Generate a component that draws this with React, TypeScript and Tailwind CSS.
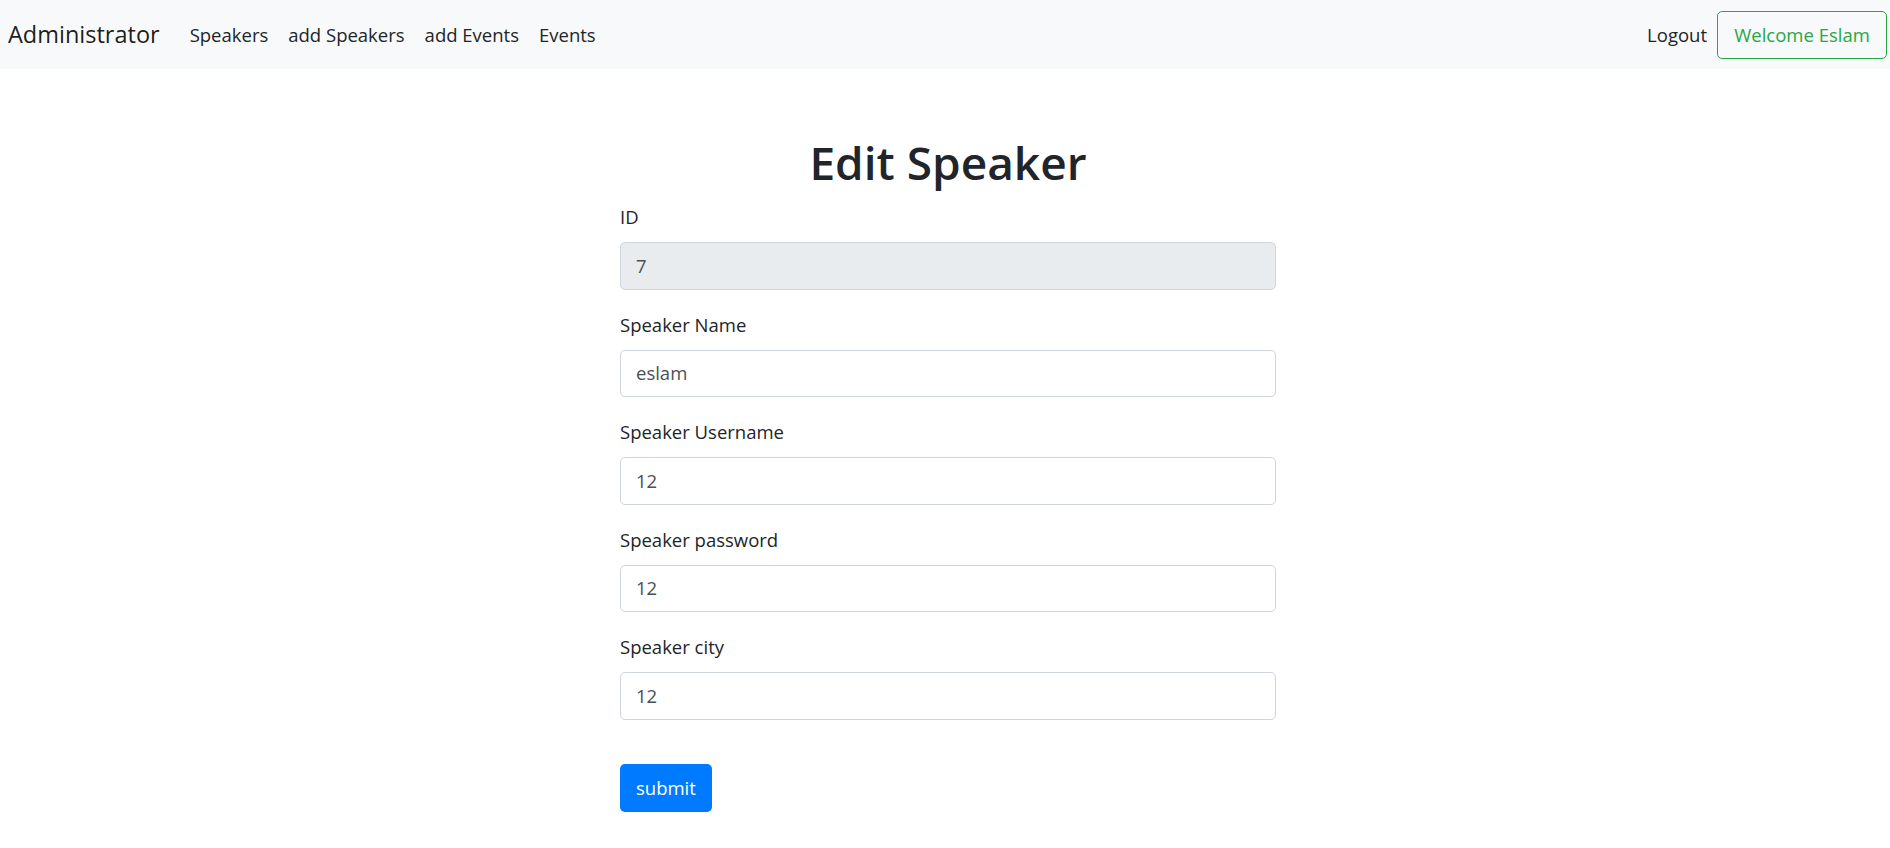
import React from "react";

const font = { fontFamily: '"Open Sans", "Noto Sans", Arial, sans-serif' };

function Field({ label, value, disabled }: { label: string; value: string; disabled?: boolean }) {
  return (
    <div className="mb-[20px]">
      <label className="block h-[30px] leading-[30px] text-[18.5px] text-[#212529] mb-[10px]">{label}</label>
      <div
        className={
          "h-[47.5px] w-full rounded-[5px] border border-[#ced4da] px-[15px] flex items-center text-[18.5px] text-[#495057] " +
          (disabled ? "bg-[#e9ecef]" : "bg-white")
        }
      >
        {value}
      </div>
    </div>
  );
}

export default function App() {
  return (
    <div className="min-h-[848px] bg-white" style={font}>
      <nav className="h-[69px] bg-[#f8f9fa] flex items-center pl-[8px] pr-[3px]">
        <span className="text-[23.5px] text-[rgba(0,0,0,0.9)] mr-[20px]">Administrator</span>
        <div className="flex items-center text-[18.5px] text-[#212529]">
          <span className="px-[10px]">Speakers</span>
          <span className="px-[10px]">add Speakers</span>
          <span className="px-[10px]">add Events</span>
          <span className="px-[10px]">Events</span>
        </div>
        <div className="ml-auto flex items-center">
          <span className="px-[10px] text-[18.5px] text-[#212529]">Logout</span>
          <span className="h-[48px] w-[170px] flex items-center justify-center rounded-[5px] border border-[#28a745] text-[#28a745] text-[18.5px]">
            Welcome Eslam
          </span>
        </div>
      </nav>
      <div className="flex justify-center pl-[6px] pt-[63px]">
        <div className="w-[656px]">
          <h1 className="text-center text-[46px] font-semibold leading-[60px] text-[#212529] mb-[10px]">Edit Speaker</h1>
          <Field label="ID" value="7" disabled />
          <Field label="Speaker Name" value="eslam" />
          <Field label="Speaker Username" value="12" />
          <Field label="Speaker password" value="12" />
          <Field label="Speaker city" value="12" />
          <button className="mt-[24px] h-[48px] px-[16px] rounded-[5px] bg-[#007bff] text-white text-[18.5px]">submit</button>
        </div>
      </div>
    </div>
  );
}
